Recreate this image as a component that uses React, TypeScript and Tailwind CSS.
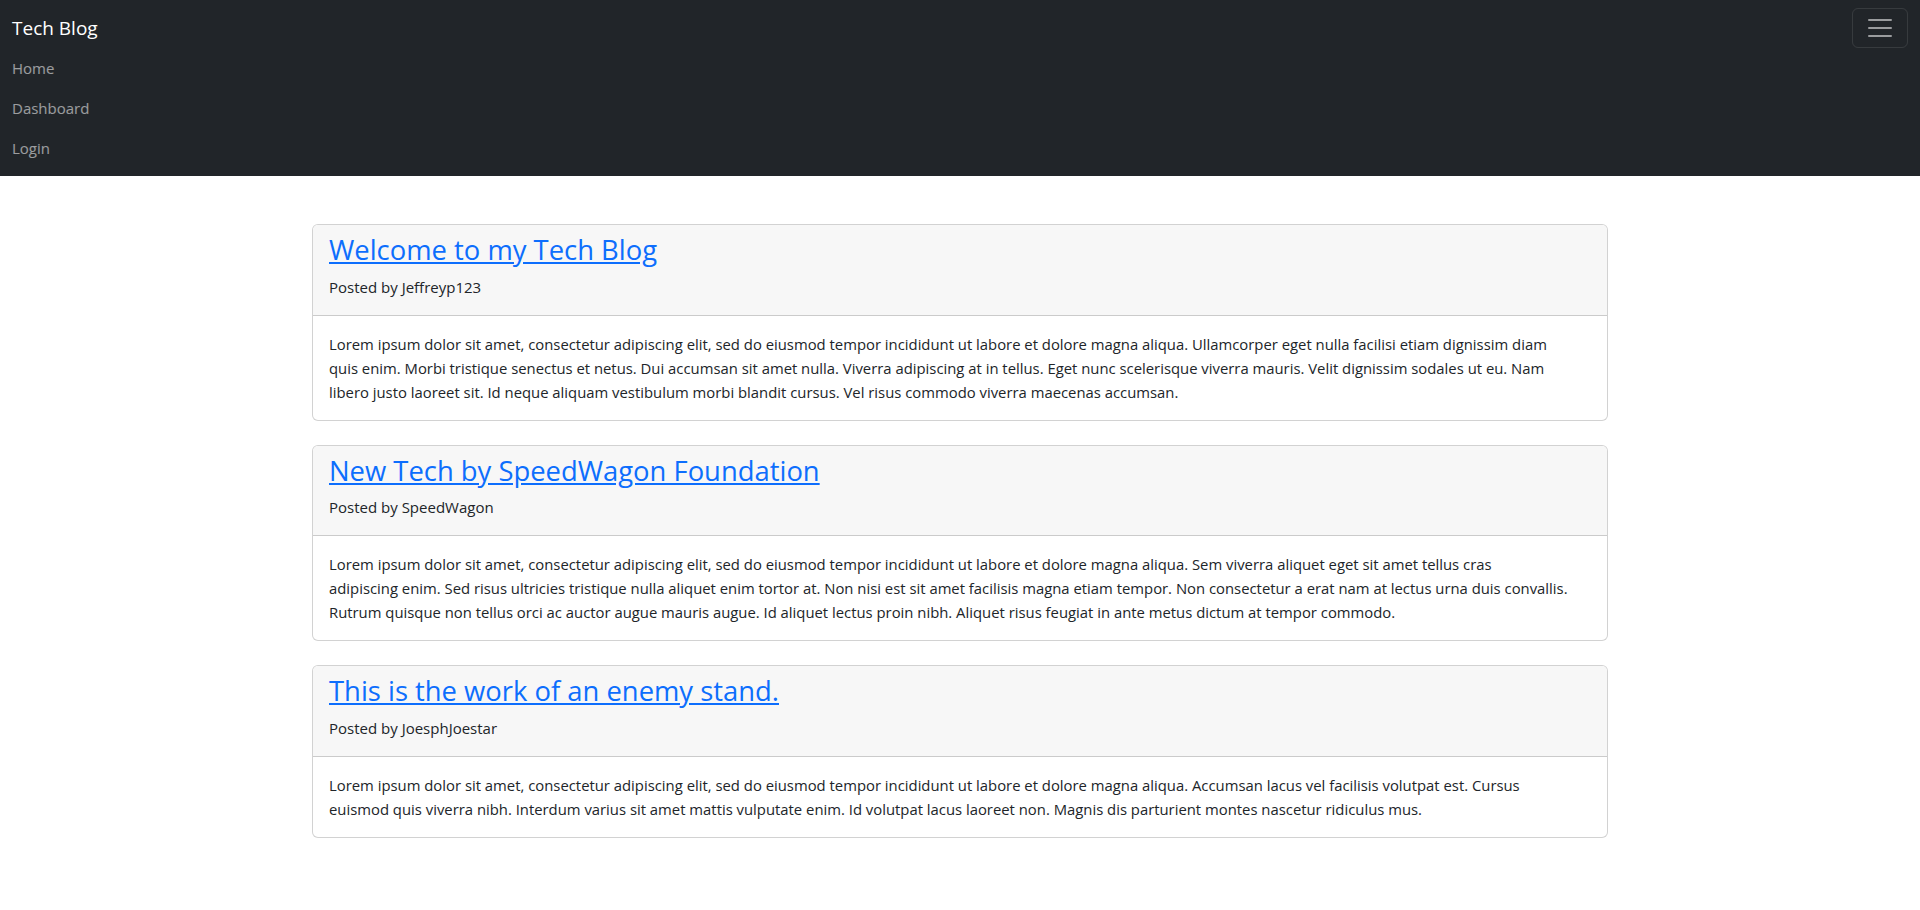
import React from 'react';

interface Post {
  title: string;
  author: string;
  body: string;
}

// line breaks follow the wrap points of the original layout
const posts: Post[] = [
  {
    title: 'Welcome to my Tech Blog',
    author: 'Jeffreyp123',
    body: 'Lorem ipsum dolor sit amet, consectetur adipiscing elit, sed do eiusmod tempor incididunt ut labore et dolore magna aliqua. Ullamcorper eget nulla facilisi etiam dignissim diam\nquis enim. Morbi tristique senectus et netus. Dui accumsan sit amet nulla. Viverra adipiscing at in tellus. Eget nunc scelerisque viverra mauris. Velit dignissim sodales ut eu. Nam\nlibero justo laoreet sit. Id neque aliquam vestibulum morbi blandit cursus. Vel risus commodo viverra maecenas accumsan.',
  },
  {
    title: 'New Tech by SpeedWagon Foundation',
    author: 'SpeedWagon',
    body: 'Lorem ipsum dolor sit amet, consectetur adipiscing elit, sed do eiusmod tempor incididunt ut labore et dolore magna aliqua. Sem viverra aliquet eget sit amet tellus cras\nadipiscing enim. Sed risus ultricies tristique nulla aliquet enim tortor at. Non nisi est sit amet facilisis magna etiam tempor. Non consectetur a erat nam at lectus urna duis convallis.\nRutrum quisque non tellus orci ac auctor augue mauris augue. Id aliquet lectus proin nibh. Aliquet risus feugiat in ante metus dictum at tempor commodo.',
  },
  {
    title: 'This is the work of an enemy stand.',
    author: 'JoesphJoestar',
    body: 'Lorem ipsum dolor sit amet, consectetur adipiscing elit, sed do eiusmod tempor incididunt ut labore et dolore magna aliqua. Accumsan lacus vel facilisis volutpat est. Cursus\neuismod quis viverra nibh. Interdum varius sit amet mattis vulputate enim. Id volutpat lacus laoreet non. Magnis dis parturient montes nascetur ridiculus mus.',
  },
];

const Navbar = () => (
  <nav className="bg-[#212529] py-2">
    <div className="px-3 flex flex-wrap items-center justify-between">
      <a href="#" className="text-white text-[19px] leading-[30px] py-[5px]">Tech Blog</a>
      <button className="border border-white/10 rounded-md px-3 py-1 leading-none">
        <svg width="30" height="30" viewBox="0 0 30 30">
          <path
            d="M4 7h22M4 15h22M4 23h22"
            stroke="rgba(255,255,255,0.55)"
            strokeWidth="2"
            strokeLinecap="round"
            strokeMiterlimit="10"
          />
        </svg>
      </button>
      <ul className="basis-full flex flex-col">
        {['Home', 'Dashboard', 'Login'].map((item) => (
          <li key={item}>
            <a href="#" className="block py-2 text-[15px] leading-6 text-white/55">{item}</a>
          </li>
        ))}
      </ul>
    </div>
  </nav>
);

const PostCard = ({ post }: { post: Post }) => (
  <div className="mb-6 border border-black/[0.175] rounded-md bg-white overflow-hidden">
    <div className="bg-[#f7f7f7] px-4 py-2 border-b border-black/[0.175]">
      <h3 className="text-[27.4px] leading-[33.6px] mb-2">
        <a href="#" className="text-[#0d6efd] underline">{post.title}</a>
      </h3>
      <p className="text-[15px] leading-6 mb-2">Posted by {post.author}</p>
    </div>
    <div className="p-4">
      <p className="text-[14.85px] leading-6 whitespace-pre-line">{post.body}</p>
    </div>
  </div>
);

export default function App() {
  return (
    <div className="min-h-screen bg-white text-[#212529] font-['Open_Sans','Noto_Sans',sans-serif]">
      <Navbar />
      <main className="max-w-[1320px] mx-auto px-3 mt-12">
        {posts.map((post) => (
          <PostCard key={post.title} post={post} />
        ))}
      </main>
    </div>
  );
}
